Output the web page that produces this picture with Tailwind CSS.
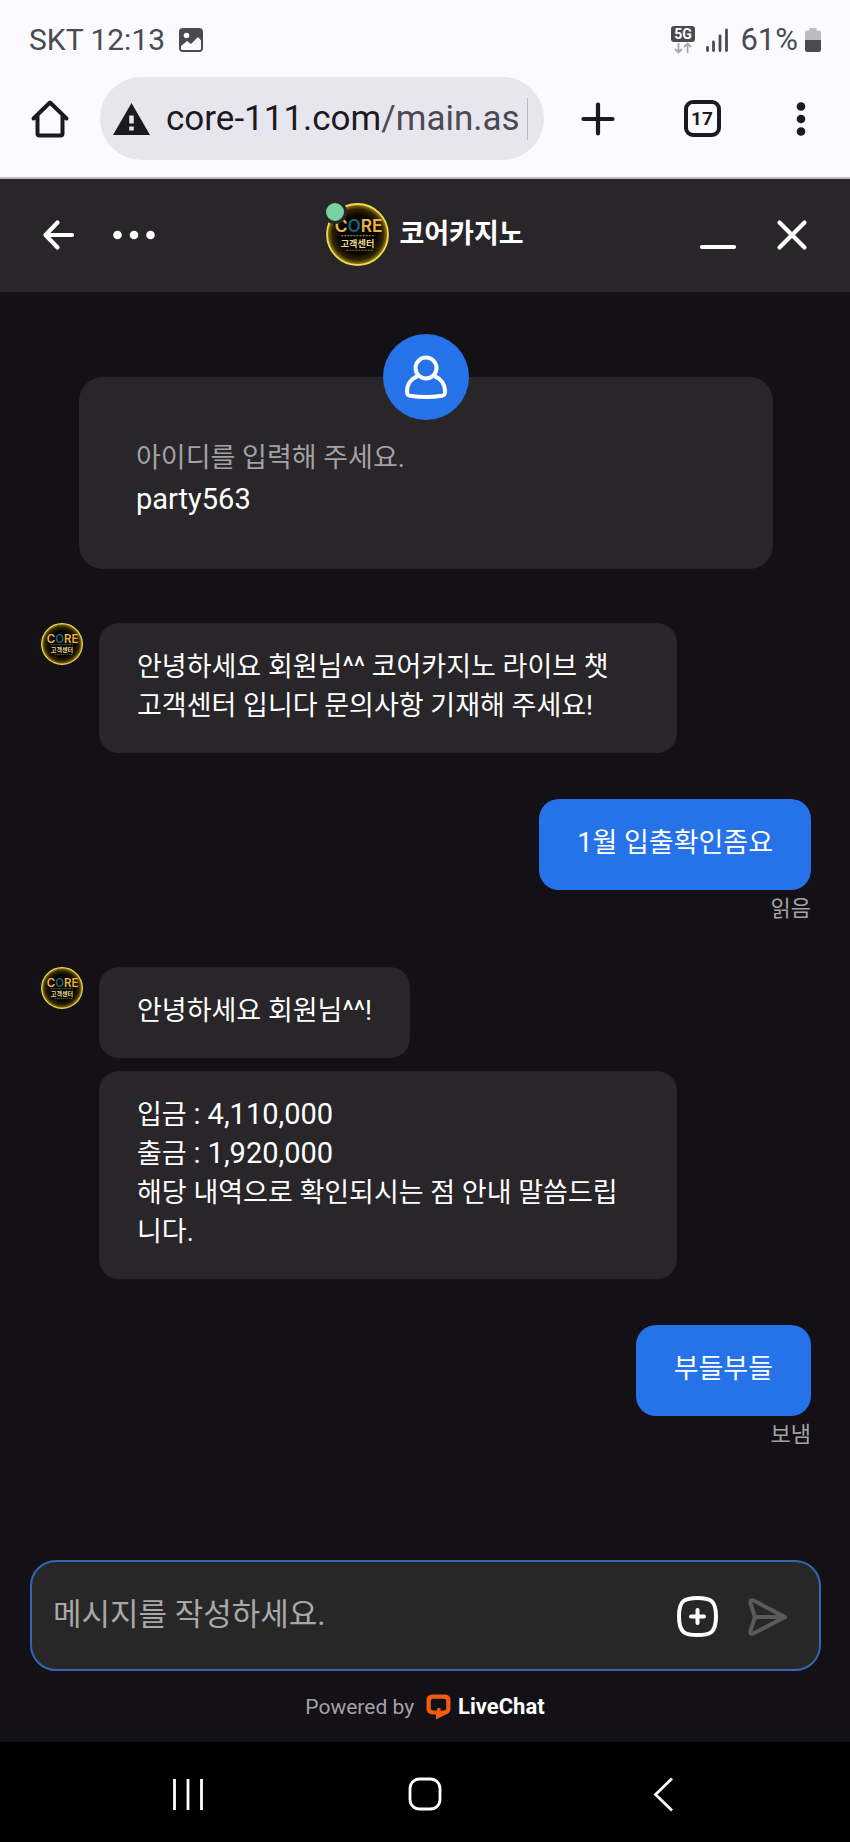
<!DOCTYPE html>
<html lang="ko">
<head>
<meta charset="utf-8">
<meta name="viewport" content="width=device-width, initial-scale=1">
<title>코어카지노</title>
<script src="https://cdn.jsdelivr.net/npm/@tailwindcss/browser@4"></script>
</head>
<body class="flex min-h-screen flex-col bg-[#131115] font-['Roboto','Noto_Sans_CJK_KR',sans-serif] text-[27px] leading-[39px] text-white">

<!-- Shared brand logo -->
<svg class="absolute size-0" aria-hidden="true">
  <defs>
    <radialGradient id="glow">
      <stop offset="0.62" stop-color="#070500"/>
      <stop offset="0.84" stop-color="#2f2502"/>
      <stop offset="1" stop-color="#a88b16"/>
    </radialGradient>
    <symbol id="logo" viewBox="0 0 62 62">
      <circle cx="31" cy="31" r="30" fill="url(#glow)" stroke="#f0d850" stroke-width="1.8"/>
      <text x="32" y="29" text-anchor="middle" font-family="Inter" font-size="17" font-weight="600" fill="#e9b53f"><tspan fill="#ecb85a">C</tspan><tspan fill="#14667c">O</tspan>RE</text>
      <path d="M15 32h33" stroke="#8d7c4c" stroke-width="1.2" stroke-dasharray="2 1"/>
      <text x="31" y="43" text-anchor="middle" font-family="Noto Sans CJK KR" font-size="9" font-weight="700" fill="#ead796">고객센터</text>
      <path d="M20 46.500h27" stroke="#84764c" stroke-width="1" stroke-dasharray="2 1"/>
    </symbol>
  </defs>
</svg>

<header class="border-b-2 border-[#bdbbc0] bg-[#fbfaff] text-[#1b1921]">
  <div class="flex items-center justify-between pt-[22px] pr-[28px] pl-[29px] text-[31px] leading-9 text-[#4b4a4e]">
    <div class="flex items-center gap-[13px]">
      <span class="text-[30px]">SKT 12:13</span>
      <svg class="size-[26px]" viewBox="0 0 26 26"><rect x="1" y="1" width="24" height="24" rx="4" fill="#4b4a4e"/><circle cx="8.500" cy="8.500" r="2.800" fill="#fbfaff"/><path d="M3 19l6-5 4 3 7-7 3 3.500v8a1.500 1.500 0 0 1-1.500 1.500h-17A1.500 1.500 0 0 1 3 21.500z" fill="#fbfaff"/></svg>
    </div>
    <div class="flex items-center">
      <svg class="mr-[9px] h-[30px] w-[26px]" viewBox="0 0 26 30"><rect x="1" y="1" width="24" height="16" rx="3" fill="#4b4a4e"/><text x="13" y="14" text-anchor="middle" font-family="Roboto" font-size="14" font-weight="700" fill="#fff">5G</text><path d="M8.500 18v9.500M5 24l3.500 3.500L12 24M17.500 28v-9.500M14 22l3.500-3.500L21 22" fill="none" stroke="#aaa8ad" stroke-width="1.800"/></svg>
      <svg class="mr-[11px] h-[26px] w-[24px]" viewBox="0 0 24 26"><path d="M2.500 20.500v3M8.500 15v8.500M15 9v14.500M21.500 3v20.500" stroke="#4b4a4e" stroke-width="2.800" stroke-linecap="round"/></svg>
      <span>61%</span>
      <svg class="ml-[6px] h-[26px] w-[18px]" viewBox="0 0 18 26"><path d="M5.500 1h7v2.500H15a2 2 0 0 1 2 2V13H1V5.500a2 2 0 0 1 2-2h2.500z" fill="#bdbbc0"/><path d="M1 13h16v9.500a2.500 2.500 0 0 1-2.500 2.500h-11A2.500 2.500 0 0 1 1 22.500z" fill="#4b4a4e"/></svg>
    </div>
  </div>
  <div class="flex items-center pt-[19px] pb-[17px]">
    <button aria-label="홈" class="flex w-[100px] justify-center"><svg class="size-10" viewBox="0 0 40 40" fill="none" stroke="#1b1921" stroke-width="4" stroke-linecap="round" stroke-linejoin="round"><path d="M3.500 19.500L20 3.500l16.500 16M7.500 17v17.500a2 2 0 0 0 2 2h21a2 2 0 0 0 2-2V17"/></svg></button>
    <label class="flex h-[83px] min-w-0 flex-1 items-center rounded-full bg-[#e7e6ef] pr-4 pl-[12px]">
      <svg class="mr-[15px] h-[34px] w-[39px] shrink-0" viewBox="0 0 39 34"><path d="M19.500 1L38 33H1z" fill="#1b1921"/><path d="M19.500 13.500v8M19.500 24.500v4" stroke="#e7e6ef" stroke-width="4.500"/></svg>
      <span class="min-w-0 flex-1 overflow-hidden border-r border-[#b9b8c1] text-[35px] leading-[42px] whitespace-nowrap" role="textbox" aria-label="주소">core-111.com<span class="text-[#4b4a54]">/main.as</span></span>
    </label>
    <button aria-label="새 탭" class="flex w-[108px] justify-center"><svg class="size-9" viewBox="0 0 36 36"><path d="M18 3.500v29M3.500 18h29" stroke="#1b1921" stroke-width="4.200" stroke-linecap="round"/></svg></button>
    <button aria-label="탭 17개" class="flex w-[100px] justify-center"><span class="flex size-[37px] items-center justify-center rounded-[9px] border-4 border-[#1b1921] text-[19px] leading-none font-bold">17</span></button>
    <button aria-label="메뉴" class="flex w-[98px] justify-center"><svg class="h-9 w-3" viewBox="0 0 12 36" fill="#1b1921"><circle cx="6" cy="5.500" r="4.300"/><circle cx="6" cy="18" r="4.300"/><circle cx="6" cy="30.500" r="4.300"/></svg></button>
  </div>
</header>

<div class="flex items-center bg-[#282629] pt-6 pb-[26px]">
  <div class="flex flex-1 items-center gap-[37px] pl-[41px]">
    <button aria-label="뒤로"><svg class="block size-[34px]" viewBox="0 0 34 34" fill="none" stroke="#fff" stroke-width="4.200" stroke-linecap="round" stroke-linejoin="round"><path d="M16.500 4.500L4.500 17l12 12.500M5 17h26"/></svg></button>
    <button aria-label="더 보기"><svg class="block h-3 w-11" viewBox="0 0 44 12" fill="#fff"><circle cx="5.500" cy="6" r="4.300"/><circle cx="22" cy="6" r="4.300"/><circle cx="38.500" cy="6" r="4.300"/></svg></button>
  </div>
  <div class="flex items-center gap-[10px]">
    <div class="relative">
      <svg class="block size-[63px]"><use href="#logo"/></svg>
      <span class="absolute -top-[3px] -left-[3px] size-6 rounded-full border-[3px] border-[#282629] bg-[#77d1a1]"></span>
    </div>
    <h1 class="text-[27px] font-bold">코어카지노</h1>
  </div>
  <div class="flex flex-1 items-center justify-end gap-[38px] pr-[41px]">
    <button aria-label="최소화"><svg class="block h-[34px] w-[38px]" viewBox="0 0 38 34"><path d="M3 29h32" stroke="#fff" stroke-width="4.200" stroke-linecap="round"/></svg></button>
    <button aria-label="닫기"><svg class="block size-[34px]" viewBox="0 0 34 34"><path d="M4.500 4.500l25 25M29.500 4.500l-25 25" stroke="#fff" stroke-width="4.200" stroke-linecap="round"/></svg></button>
  </div>
</div>

<main class="flex-1 pt-[85px]">
  <section class="relative mr-[77px] ml-[79px] rounded-[24px] bg-[#282629] px-[57px] pt-[61px] pb-[49px] leading-[41px]">
    <span class="absolute -top-[43px] left-1/2 flex size-[86px] -translate-x-1/2 items-center justify-center rounded-full bg-[#2572e9]">
      <svg class="size-[46px]" viewBox="0 0 46 46" fill="none" stroke="#fff" stroke-width="4" stroke-linejoin="round"><circle cx="23" cy="14" r="10.500"/><path d="M14.500 22.300C8 24.500 4 30.500 4 37.500c0 3 .5 3.700 3 4.200 10 1.600 22 1.600 32 0 2.500-.5 3-1.200 3-4.200 0-7-4-13-10.500-15.200"/></svg>
    </span>
    <p class="text-[#a3a1a6]">아이디를 입력해 주세요.</p>
    <p class="text-[29px]">party563</p>
  </section>

  <div class="mt-[54px] flex items-start gap-4 pl-[41px]">
    <svg class="size-[42px] shrink-0"><use href="#logo"/></svg>
    <p class="w-[68vw] rounded-[20px] bg-[#282629] px-[38px] pt-[25px] pb-[27px]">안녕하세요 회원님^^ 코어카지노 라이브 챗 고객센터 입니다 문의사항 기재해 주세요!</p>
  </div>

  <div class="mt-[46px] flex flex-col items-end gap-1 pr-[39px]">
    <p class="rounded-[20px] bg-[#2572e9] px-[38px] pt-[25px] pb-[27px]">1월 입출확인좀요</p>
    <span class="text-[22px] leading-[30px] text-[#a3a1a6]">읽음</span>
  </div>

  <div class="mt-[43px] flex items-start gap-4 pl-[41px]">
    <svg class="size-[42px] shrink-0"><use href="#logo"/></svg>
    <div class="flex flex-col items-start gap-[13px]">
      <p class="rounded-[20px] bg-[#282629] px-[38px] pt-[25px] pb-[27px]">안녕하세요 회원님^^!</p>
      <p class="w-[68vw] rounded-[20px] bg-[#282629] px-[38px] pt-[25px] pb-[27px]">입금 <span class="text-[29px] leading-none">: 4,110,000</span><br>출금 <span class="text-[29px] leading-none">: 1,920,000</span><br>해당 내역으로 확인되시는 점 안내 말씀드립니다.</p>
    </div>
  </div>

  <div class="mt-[46px] flex flex-col items-end gap-1 pr-[39px]">
    <p class="rounded-[20px] bg-[#2572e9] px-[38px] pt-[25px] pb-[27px]">부들부들</p>
    <span class="text-[22px] leading-[30px] text-[#a3a1a6]">보냄</span>
  </div>
</main>

<footer>
  <form class="mr-[29px] ml-[30px] flex items-center rounded-[26px] border-2 border-[#3267b3] bg-[#282727] pt-[33px] pb-[31px] pr-[30px] pl-[21px]">
    <input type="text" aria-label="메시지" placeholder="메시지를 작성하세요." class="h-[43px] min-w-0 flex-1 bg-transparent pb-1 text-[31px] outline-none placeholder:text-[#a9a7a9]">
    <button type="button" aria-label="첨부" class="mr-[28px]"><svg class="block size-[43px]" viewBox="0 0 43 43" fill="none" stroke="#fff" stroke-width="4" stroke-linecap="round"><path d="M21.500 3C34 3 40 5 40 21.500S34 40 21.500 40 3 38 3 21.500 9 3 21.500 3z"/><path d="M21.500 15v13M15 21.500h13"/></svg></button>
    <button type="submit" aria-label="보내기"><svg class="block h-[42px] w-[42px]" viewBox="0 0 42 42" fill="none" stroke="#5a595b" stroke-width="4" stroke-linecap="round" stroke-linejoin="round"><path d="M38 21L6.500 37.500C4 38.500 3 37 3.500 34.500L8 21 3.500 7.500C3 5 4 3.500 6.500 4.500zM8 21h29"/></svg></button>
  </form>
  <p class="flex h-[71px] items-center justify-center text-[21px] leading-[30px] text-[#a3a1a6]">
    Powered by
    <a href="#" class="ml-[11px] flex items-center gap-[6px] text-[22px] font-bold text-white">
      <svg class="size-[27px]" viewBox="0 0 27 27"><path d="M7 1.500h13q4.500 0 5.500 4.500v10q-.5 4.500-4.500 5.500l-10 5v-5H7q-4.500-.5-5.500-5V6Q2 2 7 1.500zM8 5.800q-2 .2-2.200 2v8q.3 1.500 2.200 1.700h4l.5-2.500h3v2.500H19q2-.2 2.200-1.700v-8q-.2-1.800-2.200-2z" fill="#f45a12" fill-rule="evenodd"/></svg>
      LiveChat
    </a>
  </p>
</footer>

<nav class="grid grid-cols-3 justify-items-center bg-black px-[70px] pt-[32px] pb-[28px]">
  <button aria-label="최근 앱"><svg class="block size-10" viewBox="0 0 40 40"><path d="M6.500 5v31M20 5v31M33.500 5v31" stroke="#fff" stroke-width="2.800"/></svg></button>
  <button aria-label="홈 화면"><svg class="block size-10" viewBox="0 0 40 40"><rect x="5" y="5" width="30" height="30" rx="9.500" fill="none" stroke="#fff" stroke-width="2.800"/></svg></button>
  <button aria-label="이전"><svg class="block size-10" viewBox="0 0 40 40"><path d="M30 4.500L13.500 20.500 30 36.500" fill="none" stroke="#fff" stroke-width="2.800"/></svg></button>
</nav>
</body>
</html>
